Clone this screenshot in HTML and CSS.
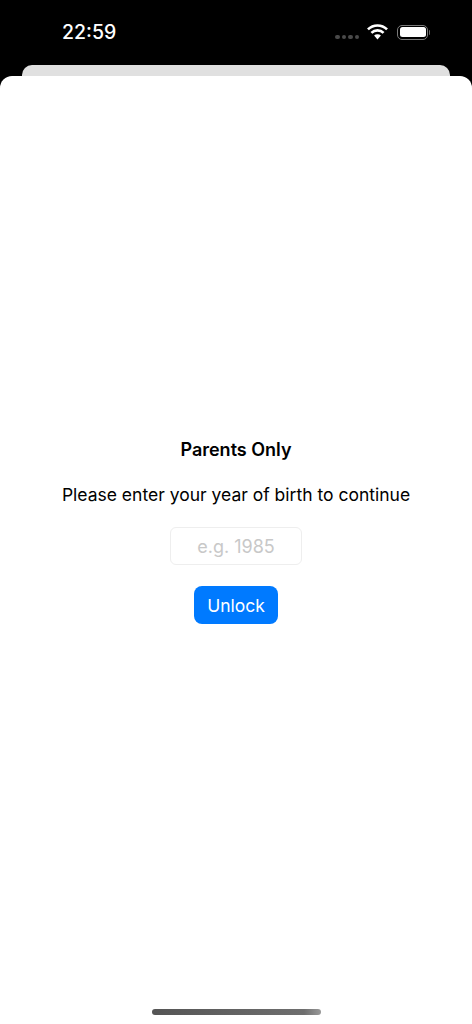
FILE: index.html
```html
<!DOCTYPE html>
<html lang="en">
<head>
<meta charset="utf-8">
<title>Parents Only</title>
<link rel="stylesheet" href="styles.css">
</head>
<body>
<div class="screen">
  <header class="status">
    <span class="time">22:59</span>
    <div class="status-icons">
      <div class="dots"><i></i><i></i><i></i><i></i></div>
      <svg class="wifi" width="21" height="16" viewBox="0 0 21 16">
        <path d="M10.5 15.4L7.1 11.6A4.8 4.8 0 0 1 13.9 11.6z" fill="#fff"/>
        <path d="M.95 5.45A13.5 13.5 0 0 1 20.05 5.45M4.42 8.92A8.6 8.6 0 0 1 16.58 8.92" fill="none" stroke="#fff" stroke-width="2.6"/>
      </svg>
      <div class="battery"><div class="level"></div></div>
      <div class="nub"></div>
    </div>
  </header>
  <div class="sheet-back"></div>
  <main class="sheet">
    <h1 class="title">Parents Only</h1>
    <p class="prompt">Please enter your year of birth to continue</p>
    <input class="year" type="text" placeholder="e.g. 1985">
    <button class="unlock" type="button">Unlock</button>
    <div class="home"></div>
  </main>
</div>
</body>
</html>
```

FILE: styles.css
```css
* { box-sizing: border-box; }
html, body { margin: 0; padding: 0; }
body {
  width: 472px;
  height: 1024px;
  overflow: hidden;
  background: #000;
  font-family: Inter, "Liberation Sans", sans-serif;
}
.screen { display: flex; flex-direction: column; height: 1024px; }
.status {
  height: 65px;
  flex: none;
  display: flex;
  align-items: flex-start;
  justify-content: space-between;
  padding: 21px 42px 0 62px;
  color: #fff;
}
.time { font-size: 19.5px; line-height: 22px; font-weight: 500; letter-spacing: 0; }
.status-icons { display: flex; align-items: center; margin-top: 3px; height: 16px; }
.dots { display: flex; gap: 2px; margin: 10px 8px 0 0; }
.dots i { width: 4.5px; height: 4.5px; border-radius: 50%; background: #4a4a4a; display: block; }
.wifi { margin-right: 9px; }
.battery {
  width: 31px; height: 15px;
  border: 1.5px solid #7a7a7a;
  border-radius: 5px;
  padding: 1.5px;
}
.level { height: 100%; background: #fff; border-radius: 2.5px; }
.nub { width: 1.5px; height: 5px; background: #666; border-radius: 0 2px 2px 0; margin-left: 0.5px; }
.sheet-back {
  height: 11px;
  flex: none;
  margin: 0 22px;
  background: #e0e0e0;
  border-radius: 10px 10px 0 0;
}
.sheet {
  flex: 1;
  background: #fff;
  border-radius: 12px 12px 0 0;
  display: flex;
  flex-direction: column;
  align-items: center;
  padding-top: 362px;
  position: relative;
}
.title {
  margin: 0;
  font-size: 18px;
  line-height: 24px;
  font-weight: 600;
  color: #000;
}
.prompt {
  margin: 21px 0 0;
  font-size: 17.5px;
  line-height: 24px;
  color: #000;
}
.year {
  margin-top: 20px;
  width: 132px;
  height: 38px;
  border: 1px solid #eeeeee;
  border-radius: 6px;
  background: #fff;
  font: 18px Inter, "Liberation Sans", sans-serif;
  text-align: center;
  outline: none;
  padding: 0;
}
.year::placeholder { color: #c8c8c8; opacity: 1; }
.unlock {
  margin-top: 21px;
  width: 84px;
  height: 38px;
  border: 0;
  border-radius: 8px;
  background: #007aff;
  color: #fff;
  font: 17.5px Inter, "Liberation Sans", sans-serif;
  padding: 0;
}
.home {
  position: absolute;
  left: 152px;
  bottom: 9px;
  width: 169px;
  height: 6px;
  border-radius: 3px;
  background: linear-gradient(90deg, #555, #6e6e6e 90%, #999);
}
```
